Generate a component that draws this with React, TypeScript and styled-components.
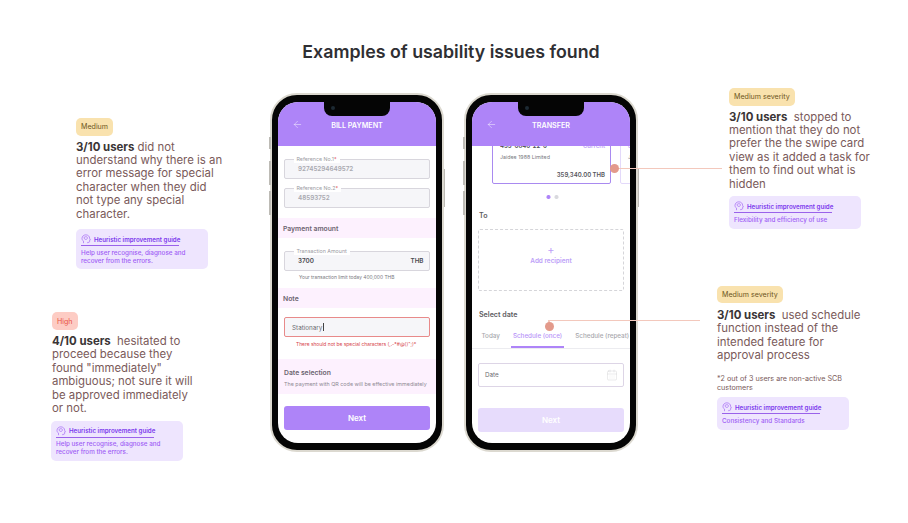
import styled, { createGlobalStyle } from "styled-components";
import { ArrowLeft, CalendarDays } from "lucide-react";

const GlobalStyle = createGlobalStyle`
  html, body {
    margin: 0;
    background: #ffffff;
    font-family: "Inter", "Liberation Sans", sans-serif;
  }
`;

const Page = styled.div`
  position: relative;
  width: 908px;
  height: 523px;
  overflow: hidden;
  background: #ffffff;
`;

const Title = styled.h1`
  margin: 0;
  padding-top: 40px;
  font-size: 17.8px;
  line-height: 22px;
  font-weight: 600;
  color: #2f2f33;
  text-align: center;
  transform: translate(-3px, 0.5px);
`;

const Stage = styled.div`
  display: flex;
  align-items: flex-start;
`;

const LeftColumn = styled.div`
  width: 270px;
  flex: none;
`;

const RightColumn = styled.div`
  flex: 1;
`;

const PhoneRow = styled.div`
  width: 368px;
  flex: none;
  display: flex;
  gap: 20px;
  margin-top: 31px;
`;

const Note = styled.section<{ $left: number; $top: number }>`
  margin-left: ${(p) => p.$left}px;
  margin-top: ${(p) => p.$top}px;
  width: 147px;
`;

const Badge = styled.span<{ $level: "medium" | "high" }>`
  display: flex;
  width: fit-content;
  align-items: center;
  height: 17.5px;
  padding: 0 5px;
  border-radius: 5px;
  font-size: 7.1px;
  background: ${(p) => (p.$level === "high" ? "#fdccc4" : "#f9e2ae")};
  color: ${(p) => (p.$level === "high" ? "#e8503f" : "#6e5520")};
`;

const NoteText = styled.p<{ $gap?: number }>`
  margin: ${(p) => p.$gap ?? 5}px 0 0;
  font-size: 11.4px;
  line-height: 13.45px;
  color: #7a5a5a;

  strong {
    font-weight: 700;
    color: #3a3536;
  }
`;

const Footnote = styled.p`
  margin: 11.5px 0 0;
  font-size: 7.2px;
  line-height: 9px;
  color: #7a5a5a;
`;

const Guide = styled.div<{ $gap: number; $shift?: number }>`
  width: 132px;
  box-sizing: border-box;
  margin-top: ${(p) => p.$gap}px;
  margin-left: ${(p) => p.$shift ?? 0}px;
  padding: 4px 5px;
  border-radius: 5px;
  background: #eee5fe;
`;

const GuideHead = styled.div`
  display: flex;
  align-items: center;
  gap: 3px;
  width: 98px;
  height: 12px;
  border-bottom: 1px solid #9a62ea;
  font-size: 6.2px;
  font-weight: 600;
  color: #7c3aed;
  white-space: nowrap;

  svg {
    flex: none;
  }
`;

const GuideText = styled.p`
  margin: 3.5px 0 0;
  font-size: 6.3px;
  line-height: 7.8px;
  font-weight: 500;
  color: #a060f5;
`;

const Frame = styled.div`
  position: relative;
  width: 174px;
  height: 359px;
  box-sizing: border-box;
  padding: 7px 6px;
  border: 2px solid #dcd9d0;
  border-radius: 27px;
  background: #050505;
  flex: none;
`;

const SideButton = styled.i<{ $side: "left" | "right"; $top: number; $height: number }>`
  position: absolute;
  ${(p) => p.$side}: -3px;
  top: ${(p) => p.$top}px;
  width: 1.5px;
  height: ${(p) => p.$height}px;
  background: #bdbbb5;
`;

const Notch = styled.div`
  position: absolute;
  z-index: 3;
  top: 7px;
  left: 50%;
  width: 66px;
  height: 14px;
  margin-left: -33px;
  border-radius: 0 0 8px 8px;
  background: #050505;

  &::after {
    content: "";
    position: absolute;
    left: 7px;
    top: 4px;
    width: 4px;
    height: 4px;
    border-radius: 50%;
    background: #1d2a33;
  }
`;

const Screen = styled.div`
  position: relative;
  height: 100%;
  border-radius: 20px;
  background: #ffffff;
  overflow: hidden;
  display: flex;
  flex-direction: column;
`;

const Header = styled.header`
  position: relative;
  z-index: 2;
  flex: none;
  height: 44px;
  box-sizing: border-box;
  padding: 17px 14px 0;
  background: #ae84f8;
  color: #ffffff;
  display: flex;
  align-items: flex-start;

  svg {
    flex: none;
  }
`;

const HeaderTitle = styled.div`
  flex: 1;
  margin: 2px 11px 0 0;
  text-align: center;
  font-size: 7.2px;
  line-height: 9px;
  font-weight: 600;
`;

const Body = styled.div<{ $top: number }>`
  padding: ${(p) => p.$top}px 6px 0;
  display: flex;
  flex-direction: column;
`;

const Field = styled.div<{
  $error?: boolean;
  $date?: boolean;
  $top?: number;
  $pad: number;
}>`
  position: relative;
  height: ${(p) => (p.$date ? 23.5 : 20)}px;
  box-sizing: border-box;
  margin-top: ${(p) => p.$top ?? 0}px;
  padding: 0 5.5px 0 ${(p) => p.$pad}px;
  display: flex;
  align-items: center;
  justify-content: space-between;
  border: 1px solid ${(p) => (p.$error ? "#e88a8a" : p.$date ? "#ddd5e6" : "#d8d6dd")};
  border-radius: 2px;
  background: ${(p) => (p.$date ? "#ffffff" : "#f6f6f9")};
  font-size: 6.3px;
`;

const FieldLabel = styled.span`
  position: absolute;
  left: 8.5px;
  top: -4px;
  padding: 0 3px;
  background: #ffffff;
  color: #9b9ba3;
  font-size: 5.3px;
  line-height: 7px;

  em {
    color: #e5484d;
    font-style: normal;
  }
`;

const FieldValue = styled.span<{ $tone: "muted" | "dark" | "plain" }>`
  color: ${(p) => (p.$tone === "muted" ? "#a9a9b0" : p.$tone === "dark" ? "#4a4a50" : "#6d6d73")};
  font-weight: ${(p) => (p.$tone === "plain" ? 400 : 600)};
`;

const Caret = styled.span`
  display: inline-block;
  width: 1px;
  height: 8px;
  margin-left: 0.5px;
  vertical-align: -1px;
  background: #444444;
`;

const Band = styled.div<{ $height: number; $top: number }>`
  height: ${(p) => p.$height}px;
  margin: ${(p) => p.$top}px -6px 0;
  padding: 0 5px;
  box-sizing: border-box;
  background: #fdf1fe;
  display: flex;
  flex-direction: column;
  justify-content: center;
`;

const DateBand = styled(Band)`
  padding: 3px 6px 0;
`;

const BandTitle = styled.div`
  font-size: 6.8px;
  line-height: 9px;
  font-weight: 600;
  color: #6c6470;
`;

const BandHint = styled.div`
  margin-top: 4.7px;
  font-size: 5.4px;
  line-height: 7px;
  color: #8f8a94;
  white-space: nowrap;
`;

const Hint = styled.div<{ $error?: boolean }>`
  margin-top: ${(p) => (p.$error ? 3.5 : 3)}px;
  padding-left: ${(p) => (p.$error ? 12 : 15)}px;
  height: 7px;
  font-size: 4.9px;
  line-height: 7px;
  white-space: nowrap;
  color: ${(p) => (p.$error ? "#d6424a" : "#77777d")};
`;

const NextButton = styled.div<{ $disabled?: boolean }>`
  height: 24px;
  margin-top: ${(p) => (p.$disabled ? 21 : 12)}px;
  border-radius: 3px;
  background: ${(p) => (p.$disabled ? "#e7dcfc" : "#ae84f8")};
  color: #ffffff;
  display: flex;
  align-items: center;
  justify-content: center;
  font-size: 8px;
  font-weight: 600;
`;

const Carousel = styled.div`
  height: 38px;
  margin: 0 -6px;
  padding-left: 20px;
  display: flex;
  align-items: flex-end;
  gap: 9px;
  overflow: hidden;
  flex: none;
`;

const AccountCard = styled.div<{ $active?: boolean }>`
  flex: none;
  width: 119px;
  height: 47px;
  box-sizing: border-box;
  padding: 4px 5px 4px 7px;
  border: 1px solid ${(p) => (p.$active ? "#a98af0" : "#e3d9fa")};
  border-radius: 2px;
  display: flex;
  flex-direction: column;
`;

const AccountTop = styled.div`
  display: flex;
  justify-content: space-between;
  font-size: 6px;
  line-height: 8px;
  font-weight: 600;
  color: #4c4c52;

  span:last-child {
    color: #bfa4f8;
  }
`;

const AccountName = styled.div`
  margin-top: 4px;
  font-size: 5.3px;
  line-height: 7px;
  color: #77777d;
`;

const AccountAmount = styled.div`
  margin-top: auto;
  text-align: right;
  font-size: 6px;
  line-height: 8px;
  font-weight: 600;
  color: #55555b;
`;

const Dots = styled.div`
  height: 5px;
  margin-top: 11px;
  display: flex;
  justify-content: center;
  gap: 4.5px;
  transform: translateX(1.5px);
`;

const Dot = styled.i<{ $on?: boolean }>`
  width: 3.5px;
  height: 3.5px;
  border-radius: 50%;
  background: ${(p) => (p.$on ? "#ae84f8" : "#d9d9de")};
`;

const SectionLabel = styled.div<{ $top: number }>`
  margin-top: ${(p) => p.$top}px;
  padding-left: 1px;
  font-size: 7.1px;
  line-height: 9px;
  font-weight: 600;
  color: #5d5d62;
`;

const AddBox = styled.div`
  height: 62px;
  box-sizing: border-box;
  margin-top: 9px;
  border: 1px dashed #d5d5d9;
  border-radius: 2px;
  display: flex;
  flex-direction: column;
  align-items: center;
  padding-top: 14px;
  color: #bd9ff8;
  font-weight: 600;
`;

const PlusMark = styled.div`
  font-size: 11px;
  line-height: 12px;
  font-weight: 400;
`;

const AddLabel = styled.div`
  margin-top: 1px;
  font-size: 6.4px;
  line-height: 8px;
`;

const TabBar = styled.div`
  height: 21px;
  margin: 9px -6px 0;
  padding-left: 8px;
  box-sizing: border-box;
  display: flex;
  gap: 10px;
  border-bottom: 1px solid #ececf0;
`;

const Tab = styled.div<{ $active?: boolean }>`
  height: 20px;
  box-sizing: border-box;
  padding: 4px 1.5px 0;
  white-space: nowrap;
  font-size: 6.3px;
  line-height: 8px;
  font-weight: 500;
  color: ${(p) => (p.$active ? "#b894f8" : "#a8a8ad")};
  border-bottom: 2px solid ${(p) => (p.$active ? "#ae84f8" : "transparent")};
`;

const Connector = styled.i<{ $x: number; $y: number; $w: number; $h?: number }>`
  position: absolute;
  z-index: 5;
  left: ${(p) => p.$x}px;
  top: ${(p) => p.$y}px;
  width: ${(p) => p.$w}px;
  height: ${(p) => p.$h ?? 1.5}px;
  background: #f3c8bc;
`;

const Pin = styled.i<{ $x: number; $y: number }>`
  position: absolute;
  z-index: 6;
  left: ${(p) => p.$x - 4.5}px;
  top: ${(p) => p.$y - 4.5}px;
  width: 9px;
  height: 9px;
  border-radius: 50%;
  background: #e39a8b;
`;

function BrainIcon() {
  return (
    <svg width="10" height="10" viewBox="0 0 12 12" fill="none" stroke="#a060f5" strokeWidth="0.8">
      <path d="M3 11V8.6C1.8 7.8 1.2 6.6 1.2 5.3 1.2 2.9 3.2 1 5.8 1c2.5 0 4.6 1.8 4.6 4.2v.5l.9 1.5-1 .4v1.5c0 .5-.4.9-.9.9H8V11" />
      <path d="M4 5.6c-.8-1.4.4-2.8 1.7-2.3 1.3-.4 2.5.9 1.8 2.3-.5.8-1.3.9-1.8.9s-1.3-.1-1.7-.9z" />
    </svg>
  );
}

type GuideCardProps = {
  text: string;
  gap: number;
  shift?: number;
};

function GuideCard({ text, gap, shift }: GuideCardProps) {
  return (
    <Guide $gap={gap} $shift={shift}>
      <GuideHead>
        <BrainIcon />
        Heuristic improvement guide
      </GuideHead>
      <GuideText>{text}</GuideText>
    </Guide>
  );
}

function Phone({ title, children }: { title: string; children: React.ReactNode }) {
  return (
    <Frame>
      <SideButton $side="left" $top={42} $height={12} />
      <SideButton $side="left" $top={66} $height={24} />
      <SideButton $side="left" $top={96} $height={24} />
      <SideButton $side="right" $top={74} $height={38} />
      <Notch />
      <Screen>
        <Header>
          <ArrowLeft size={11} strokeWidth={1} />
          <HeaderTitle>{title}</HeaderTitle>
        </Header>
        {children}
      </Screen>
    </Frame>
  );
}

function BillPayment() {
  return (
    <Phone title="BILL PAYMENT">
      <Body $top={13}>
        <Field $pad={13}>
          <FieldLabel>
            Reference No.1<em>*</em>
          </FieldLabel>
          <FieldValue $tone="muted">92745294649572</FieldValue>
        </Field>
        <Field $pad={13} $top={9}>
          <FieldLabel>
            Reference No.2<em>*</em>
          </FieldLabel>
          <FieldValue $tone="muted">48593752</FieldValue>
        </Field>
        <Band $height={20} $top={10}>
          <BandTitle>Payment amount</BandTitle>
        </Band>
        <Field $pad={13} $top={13}>
          <FieldLabel>Transaction Amount</FieldLabel>
          <FieldValue $tone="dark">3700</FieldValue>
          <FieldValue $tone="dark">THB</FieldValue>
        </Field>
        <Hint>Your transaction limit today 400,000 THB</Hint>
        <Band $height={20} $top={7}>
          <BandTitle>Note</BandTitle>
        </Band>
        <Field $pad={7} $error $top={9}>
          <FieldValue $tone="plain">
            Stationary
            <Caret />
          </FieldValue>
        </Field>
        <Hint $error>There should not be special characters (,.-*#@()";)*</Hint>
        <DateBand $height={35} $top={11.5}>
          <BandTitle>Date selection</BandTitle>
          <BandHint>The payment with QR code will be effective immediately</BandHint>
        </DateBand>
        <NextButton>Next</NextButton>
      </Body>
    </Phone>
  );
}

function Transfer() {
  return (
    <Phone title="TRANSFER">
      <Body $top={0}>
        <Carousel>
          <AccountCard $active>
            <AccountTop>
              <span>433-0840-22-0</span>
              <span>Current</span>
            </AccountTop>
            <AccountName>Jaidee 1988 Limited</AccountName>
            <AccountAmount>359,340.00 THB</AccountAmount>
          </AccountCard>
          <AccountCard>
            <AccountTop>
              <span>J</span>
            </AccountTop>
            <AccountName>J</AccountName>
          </AccountCard>
        </Carousel>
        <Dots>
          <Dot $on />
          <Dot />
        </Dots>
        <SectionLabel $top={11}>To</SectionLabel>
        <AddBox>
          <PlusMark>+</PlusMark>
          <AddLabel>Add recipient</AddLabel>
        </AddBox>
        <SectionLabel $top={19}>Select date</SectionLabel>
        <TabBar>
          <Tab>Today</Tab>
          <Tab $active>Schedule (once)</Tab>
          <Tab>Schedule (repeat)</Tab>
        </TabBar>
        <Field $pad={6} $date $top={14}>
          <FieldValue $tone="plain">Date</FieldValue>
          <CalendarDays size={12} strokeWidth={0.7} color="#c8c8cc" />
        </Field>
        <NextButton $disabled>Next</NextButton>
      </Body>
    </Phone>
  );
}

export default function App() {
  return (
    <Page>
      <GlobalStyle />
      <Title>Examples of usability issues found</Title>
      <Stage>
        <LeftColumn>
          <Note $left={76} $top={56}>
            <Badge $level="medium">Medium</Badge>
            <NoteText>
              <strong>3/10 users</strong> did not understand why there is an error message for special
              character when they did not type any special character.
            </NoteText>
            <GuideCard gap={8} text="Help user recognise, diagnose and recover from the errors." />
          </Note>
          <Note $left={52} $top={43}>
            <Badge $level="high">High</Badge>
            <NoteText>
              <strong>4/10 users</strong>&nbsp; hesitated to proceed because they found "immediately"
              ambiguous; not sure it will be approved immediately or not.
            </NoteText>
            <GuideCard gap={5} shift={-1} text="Help user recognise, diagnose and recover from the errors." />
          </Note>
        </LeftColumn>
        <PhoneRow>
          <BillPayment />
          <Transfer />
        </PhoneRow>
        <RightColumn>
          <Note $left={91} $top={26}>
            <Badge $level="medium">Medium severity</Badge>
            <NoteText>
              <strong>3/10 users</strong>&nbsp; stopped to mention that they do not prefer the the swipe
              card view as it added a task for them to find out what is hidden
            </NoteText>
            <GuideCard gap={5} text="Flexibility and efficiency of use" />
          </Note>
          <Note $left={79} $top={57}>
            <Badge $level="medium">Medium severity</Badge>
            <NoteText $gap={6}>
              <strong>3/10 users</strong>&nbsp; used schedule function instead of the intended feature
              for approval process
            </NoteText>
            <Footnote>*2 out of 3 users are non-active SCB customers</Footnote>
            <GuideCard gap={5} text="Consistency and Standards" />
          </Note>
        </RightColumn>
      </Stage>
      <Connector $x={614} $y={167.5} $w={108} />
      <Pin $x={614} $y={168} />
      <Connector $x={548} $y={319.5} $w={152} />
      <Connector $x={548} $y={320} $w={1.5} $h={6} />
      <Pin $x={549} $y={326} />
    </Page>
  );
}
